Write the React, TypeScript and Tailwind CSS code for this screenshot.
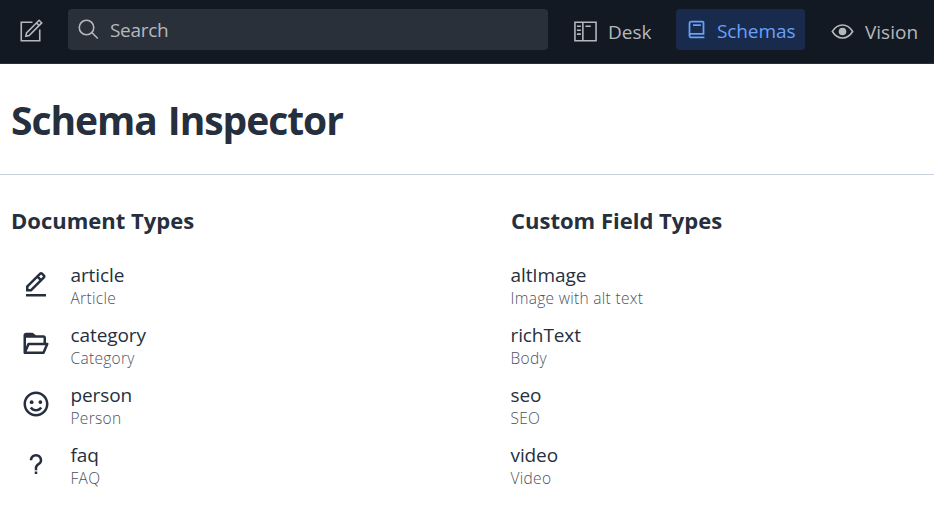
import React from "react";
import { BiBook, BiEditAlt, BiFolderOpen, BiSmile, BiQuestionMark } from "react-icons/bi";

type SchemaType = { name: string; title: string; icon?: React.ReactNode };

const documentTypes: SchemaType[] = [
  { name: "article", title: "Article", icon: <BiEditAlt size={30} /> },
  { name: "category", title: "Category", icon: <BiFolderOpen size={30} /> },
  { name: "person", title: "Person", icon: <BiSmile size={30} /> },
  { name: "faq", title: "FAQ", icon: <BiQuestionMark size={30} /> },
];

const fieldTypes: SchemaType[] = [
  { name: "altImage", title: "Image with alt text" },
  { name: "richText", title: "Body" },
  { name: "seo", title: "SEO" },
  { name: "video", title: "Video" },
];

function LineIcon({ children, className = "" }: { children: React.ReactNode; className?: string }) {
  return (
    <svg viewBox="0 0 25 25" width="33" height="33" fill="none" stroke="currentColor" strokeWidth="1.2" className={"shrink-0 " + className}>
      {children}
    </svg>
  );
}

function Row({ type }: { type: SchemaType }) {
  return (
    <li className="flex h-[60px] items-start">
      {type.icon && <span className="flex w-[60px] shrink-0 pt-[10px] pl-[10px]">{type.icon}</span>}
      <div className="-ml-[0.5px] pt-[3px]">
        <div className="h-[26px] text-[19px] leading-[26px] tracking-[-0.1px]">{type.name}</div>
        <div className="h-[21px] text-[15.5px] leading-[20px] font-light tracking-[0.3px] text-[#4c5360]">{type.title}</div>
      </div>
    </li>
  );
}

export default function App() {
  return (
    <div className="h-[511px] w-[934px] overflow-hidden bg-white font-['Open_Sans','Noto_Sans',sans-serif] text-[#262f3d]">
      <header className="flex h-16 items-start border-b border-[#2a303a] bg-[#131922] text-[#b5b8bd]">
        <LineIcon className="mt-[15px] ml-[14px]">
          <path d="M17 6L19 8M14 5.5H5.5V19.5H19.5V11M9 16L9.5 13.5L19 4L21 6L11.5 15.5L9 16Z" />
        </LineIcon>
        <div className="mt-[9px] ml-[21px] flex h-[41px] w-[480px] items-center rounded-[4px] bg-[#2a303a] text-[19px]">
          <LineIcon className="ml-[4px]">
            <path d="M15 14.8L19.5 19.3M16.5 11A5.5 5.5 0 1 1 5.5 11A5.5 5.5 0 0 1 16.5 11Z" />
          </LineIcon>
          <span className="ml-[5px] pt-[2px] tracking-[-0.3px]">Search</span>
        </div>
        <nav className="mt-[9px] ml-[21px] flex h-[41px] text-[19px]">
          <a className="flex w-[107px] pt-[6px]">
            <LineIcon>
              <path d="M10.5 5.5V19.5M6 8.5H9M16.5 8.5H12.5M6 11.5H9M6 14.5H9M4.5 5.5H20.5V19.5H4.5Z" />
            </LineIcon>
            <span className="ml-[6px] pt-[4px] leading-[26px]">Desk</span>
          </a>
          <a className="flex w-[129px] rounded-[4px] bg-[#182b4d] text-[#6ba0f8]">
            <BiBook className="mt-[10px] ml-[10px] shrink-0" size={21} />
            <span className="ml-[10px] pt-[9px] leading-[26px] tracking-[-0.1px]">Schemas</span>
          </a>
          <a className="flex pt-[6px] pl-[21px]">
            <LineIcon>
              <path d="M4.8 12.5C8.8 6 16.2 6 20.2 12.5C16.2 19 8.8 19 4.8 12.5Z" />
              <circle cx="12.5" cy="12.5" r="2.3" fill="currentColor" />
            </LineIcon>
            <span className="ml-[6px] pt-[4px] leading-[26px]">Vision</span>
          </a>
        </nav>
      </header>
      <div className="h-[111px] border-b border-[#cbd0df] pl-[11px]">
        <h1 className="pt-[29px] text-[39px] leading-[54px] font-bold tracking-[-1.05px] [word-spacing:2px]">Schema Inspector</h1>
      </div>
      <main className="flex pl-[11px]">
        <section className="w-[500px]">
          <h2 className="mt-[30px] mb-[24px] text-[22px] leading-[30px] font-bold">Document Types</h2>
          <ul>{documentTypes.map((t) => <Row key={t.name} type={t} />)}</ul>
        </section>
        <section>
          <h2 className="mt-[30px] mb-[24px] text-[22px] leading-[30px] font-bold">Custom Field Types</h2>
          <ul>{fieldTypes.map((t) => <Row key={t.name} type={t} />)}</ul>
        </section>
      </main>
    </div>
  );
}
